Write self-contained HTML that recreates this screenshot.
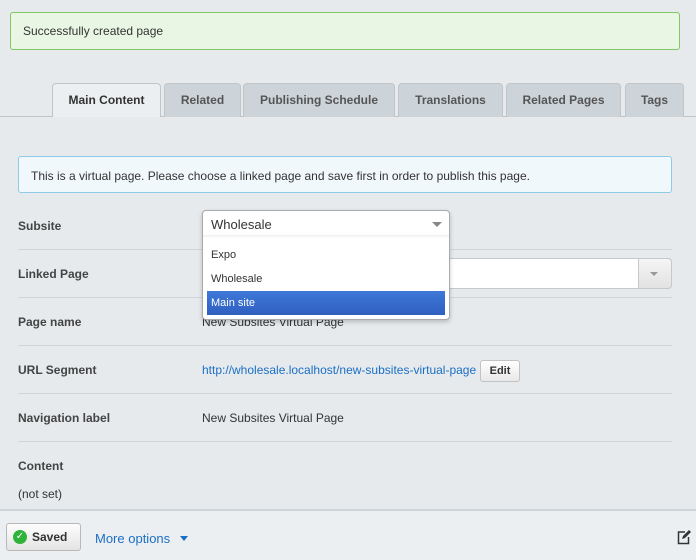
<!DOCTYPE html>
<html><head><style>
*{box-sizing:border-box;margin:0;padding:0}
body{width:696px;height:560px;background:#e6eaed;font-family:"Liberation Sans",Arial,sans-serif;font-size:12px;color:#333;position:relative;overflow:hidden}
.a{position:absolute}
.tab{position:absolute;top:83px;height:34px;border:1px solid #c0c5c9;border-bottom:none;border-radius:4px 4px 0 0;background:#cdd4d9;font-weight:bold;font-size:12px;color:#555;text-align:center;line-height:32px}
.lbl{position:absolute;left:18px;font-weight:bold;font-size:12px;color:#444}
.sep{position:absolute;left:0;width:672px;height:1px;background:#d2d6d9}
</style></head><body>
<div class="a" style="left:10px;top:12px;width:670px;height:38px;background:#e9f6e4;border:1px solid #7fc864;border-radius:3px;padding:11px 0 0 12px;color:#333">Successfully created page</div>
<div class="a" style="left:0;top:116px;width:696px;height:1px;background:#c0c5c9"></div>
<div class="tab" style="left:52px;width:109px;background:#eceff1;color:#333;height:35px">Main Content</div>
<div class="tab" style="left:164px;width:77px">Related</div>
<div class="tab" style="left:243px;width:152px">Publishing Schedule</div>
<div class="tab" style="left:398px;width:105px">Translations</div>
<div class="tab" style="left:506px;width:115px">Related Pages</div>
<div class="tab" style="left:625px;width:59px">Tags</div>
<div class="a" style="left:0;top:117px;width:696px;height:393px;background:#e6eaed"></div>
<div class="a" style="left:18px;top:156px;width:654px;height:37px;background:#f1f8fc;border:1px solid #8fcbe6;border-radius:3px;padding:12px 0 0 12px">This is a virtual page. Please choose a linked page and save first in order to publish this page.</div>
<div class="lbl" style="top:219px">Subsite</div>
<div class="sep" style="top:249px;left:18px;width:654px"></div>
<div class="lbl" style="top:267px">Linked Page</div>
<div class="a" style="left:440px;top:258px;width:232px;height:31px;background:#fff;border:1px solid #c5c9cc;border-radius:0 4px 4px 0"></div>
<div class="a" style="left:638px;top:258px;width:34px;height:31px;background:linear-gradient(#f5f5f5,#e2e2e2);border:1px solid #c5c9cc;border-radius:0 4px 4px 0"></div>
<div class="a" style="left:650px;top:272px;border-left:4px solid transparent;border-right:4px solid transparent;border-top:4px solid #999"></div>
<div class="sep" style="top:297px;left:18px;width:654px"></div>
<div class="lbl" style="top:315px">Page name</div>
<div class="a" style="left:202px;top:315px">New Subsites Virtual Page</div>
<div class="sep" style="top:345px;left:18px;width:654px"></div>
<div class="lbl" style="top:363px">URL Segment</div>
<div class="a" style="left:202px;top:363px;color:#1b6fc4">http://wholesale.localhost/new-subsites-virtual-page</div>
<div class="a" style="left:480px;top:360px;width:40px;height:22px;background:linear-gradient(#fff,#e8e8e8);border:1px solid #c2c2c2;border-radius:3px;font-weight:bold;font-size:11px;text-align:center;line-height:20px">Edit</div>
<div class="sep" style="top:393px;left:18px;width:654px"></div>
<div class="lbl" style="top:411px">Navigation label</div>
<div class="a" style="left:202px;top:411px">New Subsites Virtual Page</div>
<div class="sep" style="top:441px;left:18px;width:654px"></div>
<div class="lbl" style="top:459px">Content</div>
<div class="a" style="left:18px;top:487px">(not set)</div>
<!-- dropdown -->
<div class="a" style="left:202px;top:210px;width:248px;height:110px;background:#fff;border:1px solid #aaa;border-radius:4px;box-shadow:0 2px 5px rgba(0,0,0,.2)"></div>
<div class="a" style="left:211px;top:217px;font-size:13px">Wholesale</div>
<div class="a" style="left:432px;top:222px;border-left:5px solid transparent;border-right:5px solid transparent;border-top:5px solid #888"></div>
<div class="a" style="left:203px;top:235px;width:246px;height:3px;background:linear-gradient(#eee,#fff)"></div>
<div class="a" style="left:211px;top:249px;font-size:11px">Expo</div>
<div class="a" style="left:211px;top:273px;font-size:11px">Wholesale</div>
<div class="a" style="left:207px;top:291px;width:238px;height:24px;background:linear-gradient(#3f79d8,#2f5fbf);color:#fff;font-size:11px;padding:6px 0 0 4px">Main site</div>
<!-- footer -->
<div class="a" style="left:0;top:509px;width:696px;height:2px;background:#cfd4d8"></div>
<div class="a" style="left:0;top:511px;width:696px;height:49px;background:#eceff2"></div>
<div class="a" style="left:6px;top:523px;width:75px;height:28px;background:linear-gradient(#fdfdfd,#e4e4e4);border:1px solid #b8b8b8;border-radius:3px"></div>
<div class="a" style="left:13px;top:530px;width:14px;height:14px;border-radius:50%;background:#2fb33a;color:#fff;font-size:10px;text-align:center;line-height:14px">✓</div>
<div class="a" style="left:32px;top:530px;font-weight:bold;font-size:12px;color:#333">Saved</div>
<div class="a" style="left:95px;top:531px;color:#1b6fc4;font-size:13px">More options</div>
<div class="a" style="left:180px;top:536px;border-left:4px solid transparent;border-right:4px solid transparent;border-top:5px solid #1b6fc4"></div>
<svg class="a" style="left:677px;top:529px" width="14" height="16" viewBox="0 0 14 16"><path d="M8 3H1.5v11.5h10V8" fill="none" stroke="#333" stroke-width="1.5"/><path d="M5 10l1-3 6-6 2 2-6 6z" fill="#333"/></svg>
</body></html>
